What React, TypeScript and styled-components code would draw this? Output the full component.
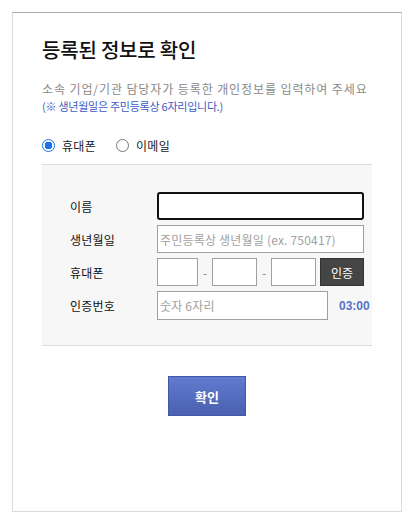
import React from "react";
import styled, { createGlobalStyle } from "styled-components";

const GlobalStyle = createGlobalStyle`
  html, body { margin: 0; padding: 0; background: #fff; }
  body { font-family: "Noto Sans CJK KR", "Noto Sans", sans-serif; color: #222; }
  * { box-sizing: border-box; }
`;

const Page = styled.div`
  padding: 12px;
`;

const Card = styled.div`
  width: 390px;
  height: 500px;
  border: 1px solid #dcdcdc;
  border-top-color: #a8a8a8;
  padding: 23px 29px 0 29px;
`;

const Title = styled.h2`
  margin: 0;
  font-size: 20px;
  line-height: 28px;
  font-weight: 500;
  color: #111;
  letter-spacing: -0.2px;
`;

const Desc = styled.p`
  margin: 16px 0 0 0;
  font-size: 12px;
  line-height: 18px;
  color: #8a8a8a;
  letter-spacing: 0.9px;
  white-space: nowrap;
`;

const Note = styled.p`
  margin: 0;
  font-size: 11px;
  line-height: 16px;
  color: #3a5cc6;
  letter-spacing: -0.25px;
  white-space: nowrap;
`;

const RadioRow = styled.div`
  display: flex;
  align-items: center;
  height: 20px;
  margin-top: 21px;
`;

const RadioItem = styled.label`
  display: flex;
  align-items: center;
  gap: 7px;
  margin-right: 20px;
  font-size: 12px;
  letter-spacing: 0.3px;
  color: #222;
`;

const RadioDot = styled.span<{ $on?: boolean }>`
  width: 13px;
  height: 13px;
  border-radius: 50%;
  border: ${(p) => (p.$on ? "1px solid #1a73e8" : "1px solid #777")};
  background: ${(p) => (p.$on ? "radial-gradient(circle, #1a73e8 0 3.6px, #fff 4px)" : "#fff")};
  display: inline-block;
`;

const Panel = styled.div`
  margin-top: 9px;
  background: #f7f7f7;
  border-top: 1px solid #dcdcdc;
  border-bottom: 1px solid #dcdcdc;
  padding: 27px 0 25px 28px;
  display: flex;
  flex-direction: column;
  gap: 5px;
`;

const Row = styled.div`
  display: grid;
  grid-template-columns: 87px 1fr;
  align-items: center;
  min-height: 28px;
`;

const Label = styled.span`
  font-size: 12px;
  color: #111;
  letter-spacing: 0.2px;
`;

const Field = styled.div`
  display: flex;
  align-items: center;
`;

const Input = styled.input<{ $w: number; $focus?: boolean; $h?: number }>`
  width: ${(p) => p.$w}px;
  height: ${(p) => p.$h ?? 28}px;
  border: ${(p) => (p.$focus ? "2px solid #111" : "1px solid #a0a0a0")};
  border-radius: ${(p) => (p.$focus ? "3px" : "0")};
  background: #fff;
  padding: 0 2px;
  font-family: "Noto Sans CJK KR", "Noto Sans", sans-serif;
  font-size: 12px;
  letter-spacing: 0.2px;
  outline: none;
  &::placeholder { color: #a0a0a0; }
`;

const Dash = styled.span`
  width: 14px;
  text-align: center;
  font-size: 12px;
  color: #888;
`;

const AuthButton = styled.button`
  margin-left: 4px;
  width: 44px;
  height: 28px;
  background: #454545;
  border: 1px solid #333;
  color: #fff;
  font-family: "Noto Sans CJK KR", "Noto Sans", sans-serif;
  font-size: 12px;
  padding: 0;
`;

const Timer = styled.span`
  margin-left: 11px;
  font-family: "Liberation Sans", Arial, sans-serif;
  font-weight: bold;
  font-size: 12px;
  color: #5773c8;
`;

const Actions = styled.div`
  display: flex;
  justify-content: center;
  margin-top: 30px;
`;

const ConfirmButton = styled.button`
  width: 78px;
  height: 40px;
  border: 1px solid #4257a8;
  background: linear-gradient(#607cce, #4a60b0);
  color: #fff;
  font-family: "Noto Sans CJK KR", "Noto Sans", sans-serif;
  font-weight: 700;
  font-size: 13px;
  padding: 0;
`;

export default function App() {
  return (
    <Page>
      <GlobalStyle />
      <Card>
        <Title>등록된 정보로 확인</Title>
        <Desc>소속 기업/기관 담당자가 등록한 개인정보를 입력하여 주세요</Desc>
        <Note>(※ 생년월일은 주민등록상 6자리입니다.)</Note>
        <RadioRow>
          <RadioItem>
            <RadioDot $on />
            휴대폰
          </RadioItem>
          <RadioItem>
            <RadioDot />
            이메일
          </RadioItem>
        </RadioRow>
        <Panel>
          <Row>
            <Label>이름</Label>
            <Field>
              <Input $w={207} $focus />
            </Field>
          </Row>
          <Row>
            <Label>생년월일</Label>
            <Field>
              <Input $w={207} placeholder="주민등록상 생년월일 (ex. 750417)" />
            </Field>
          </Row>
          <Row>
            <Label>휴대폰</Label>
            <Field>
              <Input $w={41} />
              <Dash>-</Dash>
              <Input $w={45} />
              <Dash>-</Dash>
              <Input $w={45} />
              <AuthButton>인증</AuthButton>
            </Field>
          </Row>
          <Row>
            <Label>인증번호</Label>
            <Field>
              <Input $w={171} $h={29} placeholder="숫자 6자리" />
              <Timer>03:00</Timer>
            </Field>
          </Row>
        </Panel>
        <Actions>
          <ConfirmButton>확인</ConfirmButton>
        </Actions>
      </Card>
    </Page>
  );
}
